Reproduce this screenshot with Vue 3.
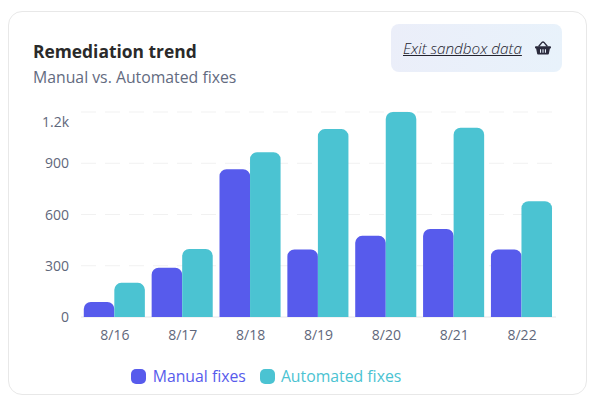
<script setup>
const rows = [
  { label: '8/16', manual: 88, auto: 200 },
  { label: '8/17', manual: 288, auto: 398 },
  { label: '8/18', manual: 865, auto: 965 },
  { label: '8/19', manual: 395, auto: 1100 },
  { label: '8/20', manual: 475, auto: 1200 },
  { label: '8/21', manual: 515, auto: 1108 },
  { label: '8/22', manual: 395, auto: 678 },
]
const ticks = [
  { label: '1.2k', v: 1200, shift: 15 },
  { label: '900', v: 900, shift: 5 },
  { label: '600', v: 600, shift: 5 },
  { label: '300', v: 300, shift: 5 },
  { label: '0', v: 0, shift: 5 },
]
const left = 72
const right = 547
const base = 261
const scale = 205 / 1200
const band = (right - left) / 7
const bw = band * 0.45
const y = (v) => base - v * scale
const bar = (x, v) => {
  const t = y(v)
  const r = Math.min(7, base - t)
  return `M${x} ${base}V${t + r}A${r} ${r} 0 0 1 ${x + r} ${t}H${x + bw - r}A${r} ${r} 0 0 1 ${x + bw} ${t + r}V${base}Z`
}
const mx = (i) => left - 0.6 + band * i + band * 0.05
const ax = (i) => mx(i) + bw
</script>

<template>
  <div class="page">
    <section class="card">
      <header class="head">
        <div class="titles">
          <h2 class="title">Remediation trend</h2>
          <p class="sub">Manual vs. Automated fixes</p>
        </div>
        <div class="exit">
          <a class="exit-link">Exit sandbox data</a>
          <svg class="basket" viewBox="0 0 16 14" aria-hidden="true">
            <path class="basket-body" fill-rule="evenodd" d="M.8 5.2h14.4c.44 0 .8.36.8.8v.8c0 .44-.36.8-.8.8h-.3l-1 5c-.1.6-.6 1-1.2 1H3.3c-.6 0-1.1-.4-1.2-1l-1-5H.8C.36 7.6 0 7.24 0 6.8V6c0-.44.36-.8.8-.8zM5 8.2v3.6h1.1V8.2zM7.45 8.2v3.6h1.1V8.2zM9.9 8.2v3.6H11V8.2z"/>
            <path class="basket-handle" d="M3.6 5.5L7 1.4Q8 .4 9 1.4L12.4 5.5"/>
          </svg>
        </div>
      </header>

      <svg class="chart" width="576" height="300" viewBox="0 0 576 300">
        <g v-for="t in ticks" :key="t.label">
          <line
            :x1="left" :x2="right" :y1="y(t.v)" :y2="y(t.v)"
            :class="t.v === 0 ? 'axis' : 'grid'"
          />
          <text class="tick" :x="left - 12" :y="y(t.v) + t.shift" text-anchor="end">{{ t.label }}</text>
        </g>
        <g v-for="(r, i) in rows" :key="r.label">
          <path class="manual" :d="bar(mx(i), r.manual)" />
          <path class="auto" :d="bar(ax(i), r.auto)" />
          <text class="tick" :x="left + band * (i + 0.5)" y="284" text-anchor="middle">{{ r.label }}</text>
        </g>
      </svg>

      <div class="legend">
        <span class="item item-manual"><i class="swatch"></i>Manual fixes</span>
        <span class="item item-auto"><i class="swatch"></i>Automated fixes</span>
      </div>
    </section>
  </div>
</template>

<style scoped>
.page {
  padding: 11px 12px 11px 8px;
  font-family: "Open Sans", sans-serif;
}
.card {
  box-sizing: border-box;
  width: 579px;
  height: 384px;
  background: #fff;
  border: 1px solid #e8e8e8;
  border-radius: 14px;
  display: flex;
  flex-direction: column;
}
.head {
  display: flex;
  justify-content: space-between;
  align-items: flex-start;
  padding: 12px 24px 0 24px;
  height: 56px;
}
.titles {
  padding-top: 16px;
}
.title {
  margin: 0;
  font-size: 17.4px;
  line-height: 22px;
  font-weight: 700;
  color: #2a2a2a;
}
.sub {
  margin: 4px 0 0;
  font-size: 15.8px;
  line-height: 22px;
  color: #636b7f;
}
.exit {
  display: flex;
  align-items: center;
  gap: 13px;
  width: 171px;
  height: 48px;
  box-sizing: border-box;
  padding: 0 11px 0 12px;
  border-radius: 8px;
  background: linear-gradient(100deg, #ebeef9, #e8f2fb);
}
.exit-link {
  font-size: 15.3px;
  font-style: italic;
  font-weight: 300;
  color: #23232e;
  text-decoration: underline;
  white-space: nowrap;
}
.basket {
  width: 16px;
  height: 14px;
  flex: none;
}
.basket-body {
  fill: #2b2b3d;
}
.basket-handle {
  fill: none;
  stroke: #2b2b3d;
  stroke-width: 1.4;
}
.chart {
  display: block;
  margin-top: -24px;
  flex: none;
}
.grid {
  stroke: #f1f1f1;
  stroke-width: 1;
  stroke-dasharray: 15 9;
}
.axis {
  stroke: #e6e6ea;
  stroke-width: 1;
}
.tick {
  font-size: 14px;
  fill: #5f677b;
}
.manual {
  fill: #575bec;
}
.auto {
  fill: #4bc3d2;
}
.legend {
  display: flex;
  justify-content: center;
  gap: 14px;
  margin-top: 9px;
  padding-right: 63px;
  font-size: 15.8px;
  line-height: 22px;
}
.item {
  display: flex;
  align-items: center;
  gap: 7px;
}
.item-auto {
  gap: 6px;
  color: #4bc3d2;
}
.item-manual {
  color: #575bec;
}
.swatch {
  width: 15px;
  height: 15px;
  border-radius: 5px;
  background: currentColor;
}
</style>
